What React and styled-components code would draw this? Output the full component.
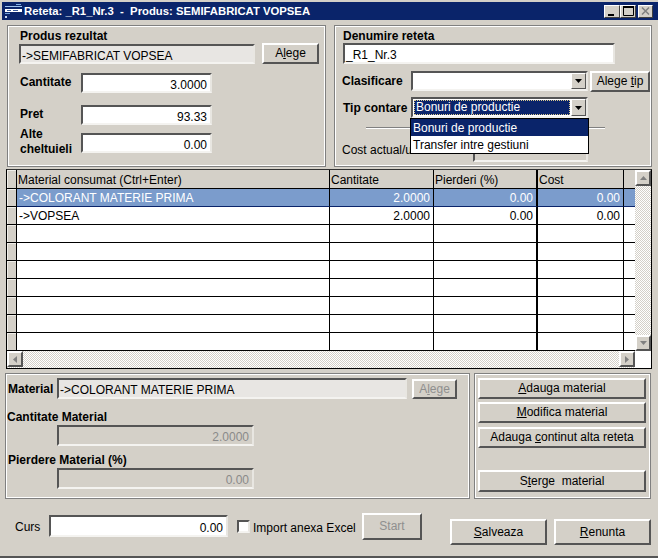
import React from "react";
import styled, { createGlobalStyle, css } from "styled-components";

const GREY = "#d4d0c8";

const sunken = css`
  border-style: solid;
  border-width: 2px;
  border-color: #555 #e8e6e1 #f4f3f0 #555;
`;

const raised = css`
  border-style: solid;
  border-width: 2px;
  border-color: #fff #555 #555 #fff;
`;

const Global = createGlobalStyle`
  html, body { margin: 0; padding: 0; background: ${GREY}; }
  body { font-family: "Liberation Sans", Arial, sans-serif; font-size: 12px; color: #000; }
  u { text-decoration: underline; }
`;

const Win = styled.div`
  width: 658px;
  height: 558px;
  box-sizing: border-box;
  padding: 2px 0 0 2px;
  background: ${GREY};
  border-bottom: 2px solid #555;
  overflow: hidden;
`;

const TitleBar = styled.div`
  height: 18px;
  width: 656px;
  display: flex;
  align-items: center;
  background: #0a246a;
  color: #fff;
  font-weight: bold;
  font-size: 11.3px;
  white-space: pre;
`;

const TitleText = styled.span`
  margin-left: 2px;
  flex: 1;
`;

const CapButtons = styled.div`
  display: flex;
  margin-right: 5px;
`;

const CapBtn = styled.div`
  width: ${(p) => p.$w || 16}px;
  height: 13px;
  box-sizing: border-box;
  background: ${GREY};
  border: 1px solid;
  border-color: #fff #404040 #404040 #fff;
  margin-left: ${(p) => p.$gap || 0}px;
  display: flex;
  align-items: center;
  justify-content: center;
`;

const TopRow = styled.div`
  display: flex;
  margin: 5px 0 0 5px;
  gap: 8px;
`;

const GroupBox = styled.div`
  box-sizing: border-box;
  width: ${(p) => p.$w}px;
  height: ${(p) => p.$h}px;
  border: 1px solid #808080;
  outline: 1px solid #fff;
  outline-offset: -2px;
  padding: ${(p) => p.$pad || "0"};
  position: relative;
`;

const Label = styled.div`
  font-weight: bold;
  line-height: ${(p) => p.$lh || 14}px;
  width: ${(p) => (p.$w ? `${p.$w}px` : "auto")};
  margin: ${(p) => p.$m || "0"};
  flex: none;
`;

const Row = styled.div`
  display: flex;
  align-items: ${(p) => p.$align || "center"};
  margin-top: ${(p) => p.$mt || 0}px;
`;

const Input = styled.div`
  ${sunken}
  box-sizing: border-box;
  width: ${(p) => p.$w}px;
  height: ${(p) => p.$h || 20}px;
  flex: none;
  background: ${(p) => (p.$tone === "ro" ? "#e8e6e3" : p.$tone === "off" ? GREY : "#fff")};
  color: ${(p) => (p.$tone === "off" ? "#8a8a8a" : "#000")};
  text-align: ${(p) => (p.$num ? "right" : "left")};
  line-height: ${(p) => p.$h || 20}px;
  padding: 0 3px 0 1px;
  margin: ${(p) => p.$m || "0"};
  font-size: 12px;
  white-space: nowrap;
  overflow: hidden;
`;

const Btn = styled.div`
  ${raised}
  box-sizing: border-box;
  width: ${(p) => p.$w}px;
  height: ${(p) => p.$h || 21}px;
  flex: none;
  background: ${GREY};
  color: ${(p) => (p.$off ? "#8f8f8f" : "#000")};
  text-align: center;
  line-height: ${(p) => (p.$h || 21) - 4}px;
  white-space: pre;
  margin-left: ${(p) => p.$ml || 0}px;
  margin-top: ${(p) => p.$mt || 0}px;
`;

const Combo = styled.div`
  ${sunken}
  box-sizing: border-box;
  width: 177px;
  height: ${(p) => p.$h || 20}px;
  flex: none;
  background: #fff;
  display: flex;
  align-items: stretch;
`;

const ComboValue = styled.div`
  flex: 1;
  margin: 1px;
  line-height: 15px;
  padding-left: 2px;
  color: #fff;
  background: ${(p) => (p.$sel ? "#0a246a" : "#fff")};
  outline: ${(p) => (p.$sel ? "1px dotted #d8c890" : "none")};
  outline-offset: -1px;
`;

const ArrowBtn = styled.div`
  ${raised}
  border-width: 1px;
  box-sizing: border-box;
  width: 15px;
  background: ${GREY};
  display: flex;
  align-items: center;
  justify-content: center;
`;

const Arrow = ({ dir = "down", fill = "#000" }) => {
  const pts = {
    down: "0,0 7,0 3.5,4",
    up: "0,4 7,4 3.5,0",
    left: "4,0 4,7 0,3.5",
    right: "0,0 0,7 4,3.5",
  }[dir];
  const vert = dir === "down" || dir === "up";
  return (
    <svg width={vert ? 7 : 4} height={vert ? 4 : 7}>
      <polygon points={pts} fill={fill} />
    </svg>
  );
};

const Separator = styled.div`
  width: 239px;
  height: 1px;
  background: #808080;
  border-bottom: 1px solid #fff;
  margin: 9px 0 0 23px;
`;

const Menu = styled.div`
  position: absolute;
  left: 75px;
  top: 92px;
  width: 179px;
  box-sizing: border-box;
  border: 1px solid #000;
  background: #fff;
  z-index: 2;
`;

const MenuItem = styled.div`
  height: 17px;
  line-height: 18px;
  padding-left: 2px;
  background: ${(p) => (p.$sel ? "#0a246a" : "#fff")};
  color: ${(p) => (p.$sel ? "#fff" : "#000")};
`;

const Grid = styled.div`
  box-sizing: border-box;
  margin: 2px 0 0 4px;
  width: 646px;
  height: 200px;
  border: 1px solid #000;
  border-top-color: #333;
  background: repeating-conic-gradient(#d4d0c8 0 25%, #fff 0 50%) 0 0 / 2px 2px;
  display: grid;
  grid-template-columns: 1fr 16px;
  grid-template-rows: 1fr 17px;
`;

const Cells = styled.div`
  display: grid;
  grid-template-columns: 10px 313px 104px 104px 86px 11px;
  grid-template-rows: 19px;
  grid-auto-rows: 18px;
  background: #fff;
  overflow: hidden;
`;

const HeadCell = styled.div`
  background: ${GREY};
  box-sizing: border-box;
  line-height: 20px;
  padding-left: 1px;
  border-right: ${(p) => (p.$bold ? 2 : p.$last ? 0 : 1)}px solid #000;
  border-bottom: 1px solid #000;
  font-size: 12px;
  white-space: nowrap;
`;

const Indicator = styled.div`
  background: ${GREY};
  box-sizing: border-box;
  border-right: 1px solid #000;
  border-bottom: 1px solid #000;
  box-shadow: inset 1px 1px 0 #f0eee9;
`;

const Cell = styled.div`
  box-sizing: border-box;
  line-height: 18px;
  padding: 0 3px 0 2px;
  background: ${(p) => (p.$sel ? "#7b9ccc" : "#fff")};
  color: ${(p) => (p.$sel ? "#fff" : "#000")};
  text-align: ${(p) => (p.$num ? "right" : "left")};
  border-right: ${(p) => (p.$bold ? 2 : p.$last ? 0 : 1)}px solid #000;
  border-bottom: 1px solid ${(p) => (p.$sel ? "#0a246a" : "#000")};
  white-space: nowrap;
`;

const VScroll = styled.div`
  display: flex;
  flex-direction: column;
  justify-content: space-between;
`;

const HScroll = styled.div`
  display: flex;
  justify-content: space-between;
  border-top: 1px solid #000;
  margin-top: -1px;
`;

const ScrollBtn = styled.div`
  ${raised}
  box-sizing: border-box;
  width: 16px;
  height: 16px;
  background: ${GREY};
  display: flex;
  align-items: center;
  justify-content: center;
`;

const Corner = styled.div`
  background: #fff;
`;

const BottomRow = styled.div`
  display: flex;
  margin: 4px 0 0 3px;
  gap: 4px;
`;

const ActionCol = styled.div`
  display: flex;
  flex-direction: column;
  padding: 4px 0 0 3px;
`;

const FooterRow = styled.div`
  display: flex;
  align-items: flex-start;
  margin: 14px 0 0 13px;
`;

const Check = styled.div`
  ${sunken}
  box-sizing: border-box;
  width: 13px;
  height: 13px;
  background: #fff;
  margin: 7px 3px 0 9px;
  flex: none;
`;

const Plain = styled.div`
  line-height: 14px;
  width: ${(p) => (p.$w ? `${p.$w}px` : "auto")};
  margin: ${(p) => p.$m || "0"};
  white-space: nowrap;
  flex: none;
`;

const AppIcon = styled.svg`
  margin-left: 3px;
  flex: none;
`;

const rows = [
  { name: "->COLORANT MATERIE PRIMA", q: "2.0000", p: "0.00", c: "0.00", sel: true },
  { name: "->VOPSEA", q: "2.0000", p: "0.00", c: "0.00" },
  ...Array.from({ length: 7 }, () => ({ name: "", q: "", p: "", c: "" })),
];

export default function App() {
  return (
    <>
      <Global />
      <Win>
        <TitleBar>
          <AppIcon width="17" height="14" viewBox="0 0 17 14">
            <rect x="0" y="2" width="17" height="1" fill="#9fc4ee" />
            <rect x="11" y="0" width="5" height="1" fill="#7fb0e8" />
            <rect x="0" y="5" width="17" height="3" fill="#fff" />
            <rect x="2" y="6" width="4" height="1" fill="#3a5a9a" />
            <rect x="8" y="6" width="5" height="1" fill="#3a5a9a" />
            <rect x="0" y="9" width="5" height="1" fill="#6fa0d8" />
            <rect x="0" y="12" width="2" height="2" fill="#c8d8f0" />
          </AppIcon>
          <TitleText>Reteta: _R1_Nr.3  -  Produs: SEMIFABRICAT VOPSEA</TitleText>
          <CapButtons>
            <CapBtn>
              <svg width="10" height="9"><rect x="1" y="7" width="6" height="2" /></svg>
            </CapBtn>
            <CapBtn>
              <svg width="11" height="10"><path d="M0.5 1.5h10v8h-10z" fill="none" stroke="#000" /><rect x="0" y="0" width="11" height="2" /></svg>
            </CapBtn>
            <CapBtn $w={15} $gap={2}>
              <svg width="9" height="8"><path d="M1 0.5l7 7M8 0.5l-7 7" stroke="#808080" strokeWidth="1.5" /></svg>
            </CapBtn>
          </CapButtons>
        </TitleBar>

        <TopRow>
          <GroupBox $w={319} $h={142} $pad="3px 0 0 11px">
            <Label $m="0 0 0 1px">Produs rezultat</Label>
            <Row $mt={1} $align="flex-start">
              <Input $w={236} $h={20} $tone="ro">-&gt;SEMIFABRICAT VOPSEA</Input>
              <Btn $w={57} $ml={7} $mt={-1}>A<u>l</u>ege</Btn>
            </Row>
            <Row $mt={9}>
              <Label $w={61} $m="0 0 3px 1px">Cantitate</Label>
              <Input $w={131} $num>3.0000</Input>
            </Row>
            <Row $mt={12}>
              <Label $w={61} $m="0 0 3px 1px">Pret</Label>
              <Input $w={131} $num>93.33</Input>
            </Row>
            <Row $mt={8} $align="flex-start">
              <Label $w={61} $lh={15} $m="-6px 0 -4px 1px">Alte<br />cheltuieli</Label>
              <Input $w={131} $num>0.00</Input>
            </Row>
          </GroupBox>

          <GroupBox $w={318} $h={142} $pad="3px 0 0 8px">
            <Label>Denumire reteta</Label>
            <Input $w={272} $h={21}>_R1_Nr.3</Input>
            <Row $mt={7} $align="flex-start">
              <Label $w={69} $m="3px 0 0 -1px">Clasificare</Label>
              <Combo>
                <ComboValue />
                <ArrowBtn><Arrow /></ArrowBtn>
              </Combo>
              <Btn $w={60} $ml={2}>Alege <u>t</u>ip</Btn>
            </Row>
            <Row $mt={5}>
              <Label $w={68}>Tip contare</Label>
              <Combo $h={21}>
                <ComboValue $sel>Bonuri de productie</ComboValue>
                <ArrowBtn><Arrow /></ArrowBtn>
              </Combo>
            </Row>
            <Separator />
            <Row $mt={13} $align="flex-start">
              <Plain $w={131} $m="1px 0 0 -1px">Cost actual/u</Plain>
              <Input $w={115} $h={20} $tone="off" />
            </Row>
            <Menu>
              <MenuItem $sel>Bonuri de productie</MenuItem>
              <MenuItem>Transfer intre gestiuni</MenuItem>
            </Menu>
          </GroupBox>
        </TopRow>

        <Grid>
          <Cells>
            <Indicator />
            <HeadCell>Material consumat (Ctrl+Enter)</HeadCell>
            <HeadCell>Cantitate</HeadCell>
            <HeadCell $bold>Pierderi (%)</HeadCell>
            <HeadCell>Cost</HeadCell>
            <HeadCell $last />
            {rows.map((r, i) => (
              <React.Fragment key={i}>
                <Indicator />
                <Cell $sel={r.sel}>{r.name}</Cell>
                <Cell $sel={r.sel} $num>{r.q}</Cell>
                <Cell $sel={r.sel} $num $bold>{r.p}</Cell>
                <Cell $sel={r.sel} $num>{r.c}</Cell>
                <Cell $sel={r.sel} $last />
              </React.Fragment>
            ))}
          </Cells>
          <VScroll>
            <ScrollBtn><Arrow dir="up" fill="#808080" /></ScrollBtn>
            <ScrollBtn><Arrow dir="down" fill="#808080" /></ScrollBtn>
          </VScroll>
          <HScroll>
            <ScrollBtn><Arrow dir="left" fill="#808080" /></ScrollBtn>
            <ScrollBtn><Arrow dir="right" fill="#808080" /></ScrollBtn>
          </HScroll>
          <Corner />
        </Grid>

        <BottomRow>
          <GroupBox $w={465} $h={126} $pad="4px 0 0 2px">
            <Row>
              <Label $w={49}>Material</Label>
              <Input $w={350} $h={21} $tone="ro">-&gt;COLORANT MATERIE PRIMA</Input>
              <Btn $w={45} $h={20} $ml={5} $off>A<u>l</u>ege</Btn>
            </Row>
            <Label $m="11px 0 0 -1px">Cantitate Material</Label>
            <Input $w={197} $h={21} $num $tone="off" $m="1px 0 0 49px">2.0000</Input>
            <Label $m="7px 0 0 0">Pierdere Material (%)</Label>
            <Input $w={197} $h={21} $num $tone="off" $m="1px 0 0 49px">0.00</Input>
          </GroupBox>
          <GroupBox $w={177} $h={126}>
            <ActionCol>
              <Btn $w={168}><u>A</u>dauga material</Btn>
              <Btn $w={168} $mt={3}><u>M</u>odifica material</Btn>
              <Btn $w={168} $mt={4}>Adauga <u>c</u>ontinut alta reteta</Btn>
              <Btn $w={168} $h={22} $mt={22}>S<u>t</u>erge  material</Btn>
            </ActionCol>
          </GroupBox>
        </BottomRow>

        <FooterRow>
          <Plain $w={34} $m="7px 0 0 0">Curs</Plain>
          <Input $w={179} $h={22} $num $m="2px 0 0 0">0.00</Input>
          <Check />
          <Plain $w={109} $m="8px 0 0 0">Import anexa Excel</Plain>
          <Btn $w={60} $h={27} $off>Start</Btn>
          <Btn $w={97} $h={26} $ml={28} $mt={6}><u>S</u>alveaza</Btn>
          <Btn $w={97} $h={26} $ml={7} $mt={6}><u>R</u>enunta</Btn>
        </FooterRow>
      </Win>
    </>
  );
}
